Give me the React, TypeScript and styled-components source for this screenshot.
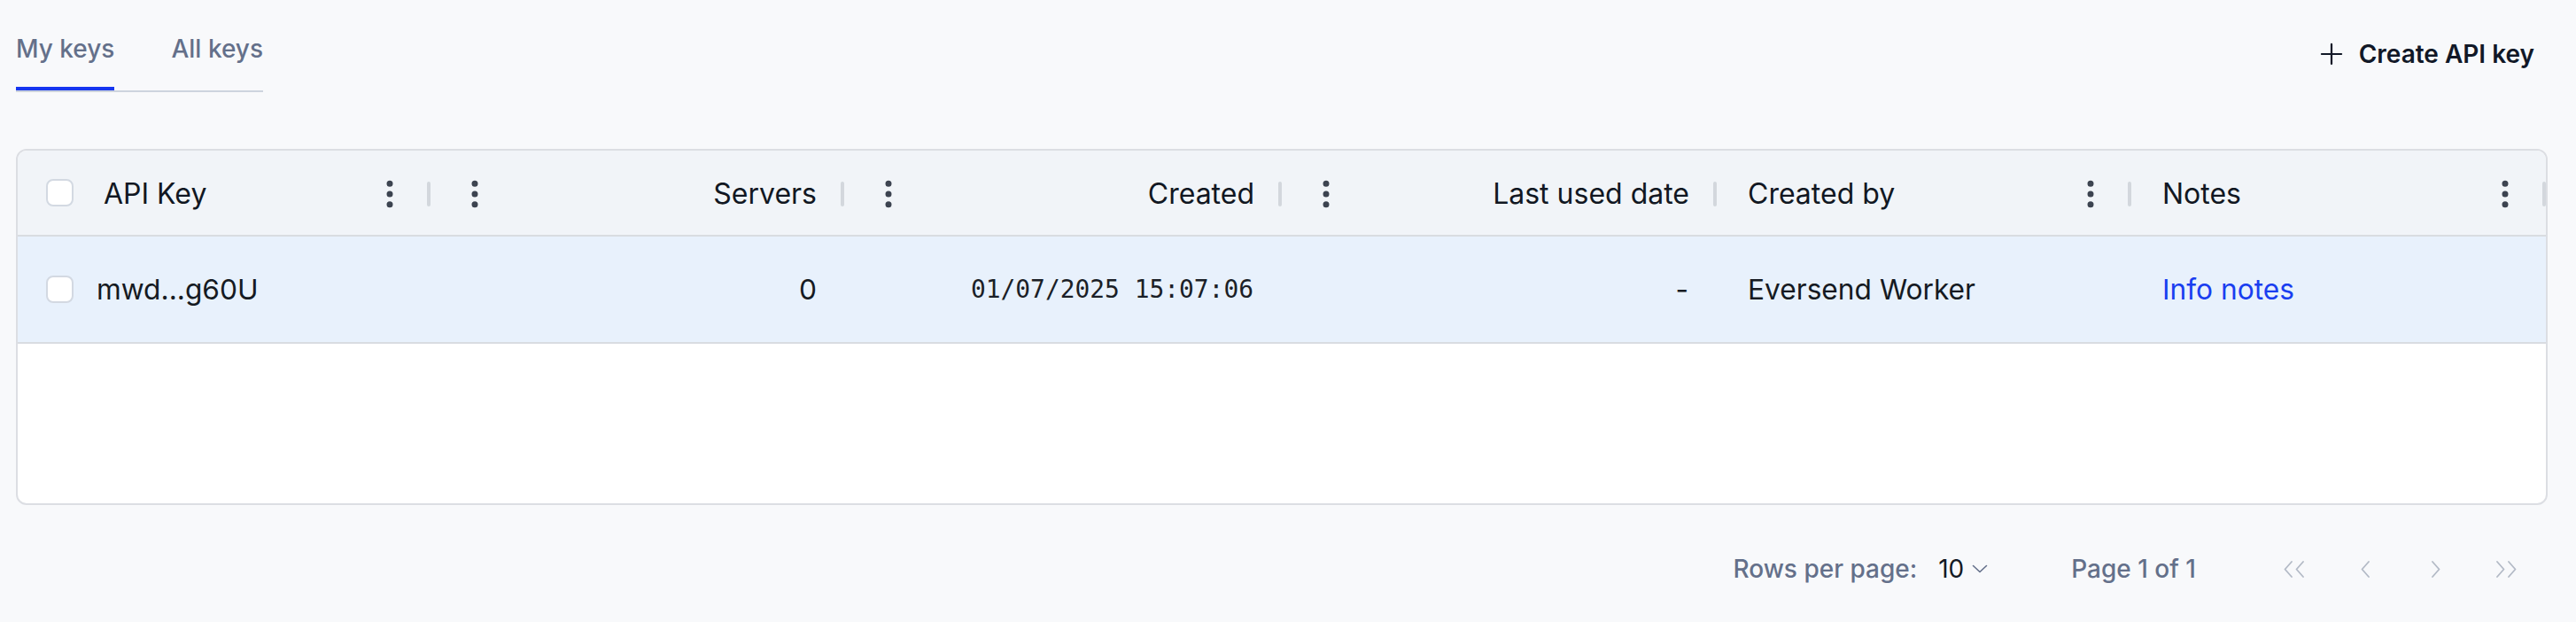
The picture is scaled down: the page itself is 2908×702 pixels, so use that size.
import React from 'react';
import styled, { createGlobalStyle } from 'styled-components';
import { EllipsisVertical, Plus } from 'lucide-react';

const GlobalStyle = createGlobalStyle`
  html, body {
    margin: 0;
    padding: 0;
    background: #f8f9fb;
  }
  body {
    font-family: Inter, "Noto Sans", "Liberation Sans", sans-serif;
    color: #111827;
  }
`;

const GRID = '69px 397px 467px 494px 491px 468px 1fr';

const Page = styled.div`
  box-sizing: border-box;
  width: 2908px;
  min-height: 702px;
  padding: 41px 32px 0 18px;
`;

const TopBar = styled.div`
  display: flex;
  justify-content: space-between;
  align-items: flex-start;
`;

const TabList = styled.div`
  display: flex;
  gap: 64px;
  border-bottom: 2px solid #cdd4de;
`;

const Tab = styled.button<{ $active?: boolean }>`
  all: unset;
  cursor: pointer;
  font-size: 28px;
  line-height: 28px;
  font-weight: 500;
  color: #64708a;
  padding-bottom: 29px;
  border-bottom: 4px solid ${(p) => (p.$active ? '#1636f0' : 'transparent')};
`;

const CreateButton = styled.button`
  all: unset;
  cursor: pointer;
  display: flex;
  align-items: center;
  gap: 12px;
  margin-top: 1px;
  padding-right: 15px;
  font-size: 28px;
  line-height: 32px;
  font-weight: 600;
  color: #111827;
`;

const Card = styled.div`
  margin-top: 64px;
  border: 2px solid #dcdee3;
  border-radius: 12px;
  overflow: hidden;
  background: #fff;
`;

const HeaderRow = styled.div`
  display: grid;
  grid-template-columns: ${GRID};
  height: 95px;
  background: #f1f4f8;
  border-bottom: 2px solid #d9dce1;
`;

const DataRow = styled.div`
  display: grid;
  grid-template-columns: ${GRID};
  height: 119px;
  background: #e8f1fc;
  border-bottom: 2px solid #d9dce1;
`;

const EmptyArea = styled.div`
  height: 180px;
`;

const CheckCell = styled.div`
  display: flex;
  align-items: center;
  padding-left: 32px;
`;

const Checkbox = styled.span`
  box-sizing: border-box;
  width: 31px;
  height: 31px;
  border: 2px solid #d3d9e2;
  border-radius: 8px;
  background: #fff;
`;

const HeaderCell = styled.div<{ $align: 'left' | 'right'; $pad?: number }>`
  display: flex;
  align-items: center;
  padding-top: 2px;
  padding-left: ${(p) => (p.$pad ?? (p.$align === 'left' ? 35 : 30))}px;
  font-size: 32px;
  line-height: 32px;
  font-weight: 400;
  color: #111722;
`;

const HeaderTitle = styled.span<{ $align: 'left' | 'right' }>`
  flex: 1;
  white-space: nowrap;
  text-align: ${(p) => p.$align};
  margin-right: ${(p) => (p.$align === 'right' ? 27 : 0)}px;
`;

const MenuButton = styled.span<{ $align: 'left' | 'right' }>`
  display: flex;
  width: 40px;
  justify-content: center;
  color: #3c4350;
  margin-right: ${(p) => (p.$align === 'left' ? 22 : 0)}px;
`;

const Separator = styled.span`
  width: 4px;
  height: 28px;
  border-radius: 2px;
  background: #d3d7dd;
`;

const Cell = styled.div<{ $align: 'left' | 'right'; $pad?: number }>`
  display: flex;
  align-items: center;
  justify-content: ${(p) => (p.$align === 'right' ? 'flex-end' : 'flex-start')};
  padding-left: ${(p) => (p.$align === 'left' ? p.$pad ?? 35 : 0)}px;
  padding-right: ${(p) => (p.$align === 'right' ? p.$pad ?? 31 : 0)}px;
  font-size: 31.7px;
  line-height: 32px;
  color: #151a22;
  white-space: nowrap;
`;

const Mono = styled.span`
  font-family: "DejaVu Sans Mono", "Liberation Mono", monospace;
  font-size: 27.9px;
  color: #1b1f27;
`;

const NoteLink = styled.a`
  color: #1a3ef0;
  text-decoration: none;
  cursor: pointer;
`;

const Pagination = styled.div`
  display: flex;
  justify-content: flex-end;
  align-items: center;
  height: 64px;
  margin-top: 40px;
  padding-right: 26px;
  font-size: 28px;
  line-height: 28px;
  font-weight: 500;
  color: #64708a;
`;

const RowsSelect = styled.span`
  display: flex;
  align-items: center;
  gap: 9px;
  margin-left: 24px;
  color: #141a24;
  font-weight: 400;
`;

const PageInfo = styled.span`
  margin-left: 94px;
  margin-right: 91px;
`;

const PagerButtons = styled.div`
  display: flex;
  gap: 40px;
`;

const PagerButton = styled.button`
  all: unset;
  display: flex;
  justify-content: center;
  width: 40px;
  color: #b3bac6;
`;

const Chevron = ({ dir, double }: { dir: 'left' | 'right'; double?: boolean }) => {
  const one = dir === 'left' ? 'M9 1 L1.5 9.5 L9 18' : 'M1 1 L8.5 9.5 L1 18';
  const width = double ? 24 : 10;
  return (
    <svg width={width} height={19} viewBox={`0 0 ${width} 19`} fill="none" stroke="currentColor" strokeWidth={1.8} strokeLinecap="round" strokeLinejoin="round">
      <path d={one} />
      {double && <path d={one} transform="translate(13 0)" />}
    </svg>
  );
};

const columns: { title: string; align: 'left' | 'right'; pad?: number }[] = [
  { title: 'API Key', align: 'left', pad: 28 },
  { title: 'Servers', align: 'right' },
  { title: 'Created', align: 'right' },
  { title: 'Last used date', align: 'right' },
  { title: 'Created by', align: 'left' },
  { title: 'Notes', align: 'left' },
];

const App = () => (
  <Page>
    <GlobalStyle />
    <TopBar>
      <TabList>
        <Tab $active>My keys</Tab>
        <Tab>All keys</Tab>
      </TabList>
      <CreateButton>
        <Plus size={38} strokeWidth={1.4} />
        Create API key
      </CreateButton>
    </TopBar>

    <Card>
      <HeaderRow>
        <CheckCell>
          <Checkbox />
        </CheckCell>
        {columns.map((col) => (
          <HeaderCell key={col.title} $align={col.align} $pad={col.pad}>
            {col.align === 'right' && (
              <MenuButton $align="right">
                <EllipsisVertical size={40} strokeWidth={2.2} />
              </MenuButton>
            )}
            <HeaderTitle $align={col.align}>{col.title}</HeaderTitle>
            {col.align === 'left' && (
              <MenuButton $align="left">
                <EllipsisVertical size={40} strokeWidth={2.2} />
              </MenuButton>
            )}
            <Separator />
          </HeaderCell>
        ))}
      </HeaderRow>
      <DataRow>
        <CheckCell>
          <Checkbox />
        </CheckCell>
        <Cell $align="left" $pad={20}>mwd...g60U</Cell>
        <Cell $align="right">0</Cell>
        <Cell $align="right" $pad={32}>
          <Mono>01/07/2025 15:07:06</Mono>
        </Cell>
        <Cell $align="right" $pad={32}>-</Cell>
        <Cell $align="left">Eversend Worker</Cell>
        <Cell $align="left">
          <NoteLink>Info notes</NoteLink>
        </Cell>
      </DataRow>
      <EmptyArea />
    </Card>

    <Pagination>
      Rows per page:
      <RowsSelect>
        10
        <svg width={18} height={10} viewBox="0 0 18 10" fill="none" stroke="#64708a" strokeWidth={1.6} strokeLinecap="round" strokeLinejoin="round">
          <path d="M1.5 1.5 L9 8.5 L16.5 1.5" />
        </svg>
      </RowsSelect>
      <PageInfo>Page 1 of 1</PageInfo>
      <PagerButtons>
        <PagerButton>
          <Chevron dir="left" double />
        </PagerButton>
        <PagerButton>
          <Chevron dir="left" />
        </PagerButton>
        <PagerButton>
          <Chevron dir="right" />
        </PagerButton>
        <PagerButton>
          <Chevron dir="right" double />
        </PagerButton>
      </PagerButtons>
    </Pagination>
  </Page>
);

export default App;
